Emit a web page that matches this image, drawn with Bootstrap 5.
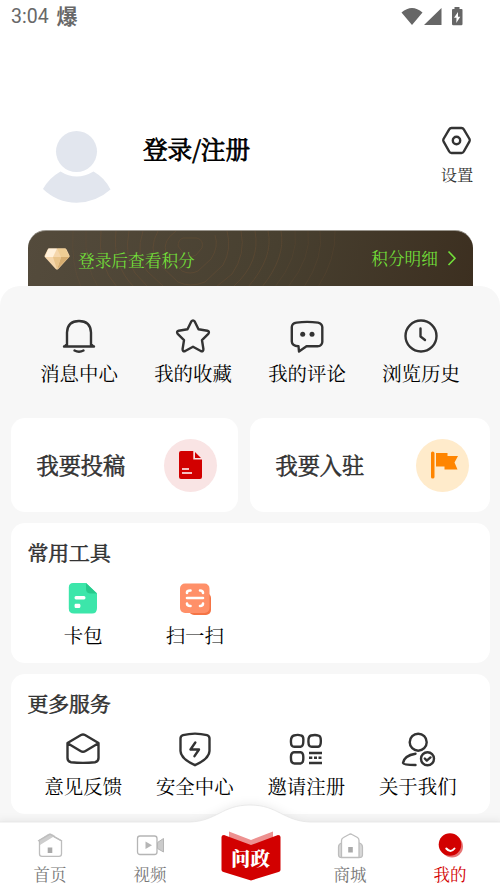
<!DOCTYPE html>
<html lang="zh-CN">
<head>
<meta charset="utf-8">
<meta name="viewport" content="width=device-width, initial-scale=1">
<title>我的</title>
<link rel="stylesheet" href="https://cdn.jsdelivr.net/npm/bootstrap@5.3.0/dist/css/bootstrap.min.css">
<style>
body{font-family:"Noto Serif CJK SC","Noto Serif SC","Source Han Serif SC","Liberation Serif","Noto Sans CJK SC",serif;color:#000;width:500px;height:889px;overflow:hidden;background:#fff}
svg{display:block;flex:none;overflow:visible}
.line{fill:none;stroke:#333;stroke-width:2.4;stroke-linecap:round;stroke-linejoin:round}
.statusbar{height:34px;padding:0 37px 0 11px;font:400 19.5px/34px Roboto,"Noto Sans CJK SC",sans-serif;color:#686868}
.statusbar b{font-size:21px}
.profile{height:196px;padding:91px 26px 0 43px}
.avatar{margin-top:6px}
.login{font-size:24.6px;font-weight:400;-webkit-text-stroke:.8px currentColor;line-height:36px;margin:6px 0 0 32px;color:#000}
.setting{font-size:16.3px;line-height:24px;color:#333;width:34px}
.setting svg{margin-bottom:7px}
.points{height:56px;margin:0 27px 0 28px;border-radius:18px 18px 0 0;background:linear-gradient(105deg,#544b3c,#484030 55%,#3c2f20);color:#72df39;font-size:16.7px;overflow:hidden;position:relative;border-top:1px solid #99958d}
.rings{position:absolute;left:0;top:0}
.panel{height:536px;background:#f7f7f7;border-radius:20px 20px 0 0;padding:0 10px 0 11px}
.quick{height:132px;padding:31px 12px 0 11px}
.item{font-size:19.4px;line-height:28px;flex:1 1 0;white-space:nowrap}
.item svg{margin-bottom:4px}
.tile{background:#fff;border-radius:14px}
.entry{height:94px;font-size:22.2px;-webkit-text-stroke:.6px currentColor;color:#333;padding:0 21px 0 25.5px}
.entry svg{-webkit-text-stroke:0}
.disc{width:53px;height:53px;border-radius:50%}
.pink{background:#f9e4e4}.amber{background:#ffebcb}
.group{height:140px;padding:13px 16.500px 0 16.500px;margin-top:11px}
.group h2{font-size:20.8px;font-weight:400;-webkit-text-stroke:.6px currentColor;line-height:32px;color:#333;margin:0 0 11px}
.group .item svg{margin-bottom:4px}
.tabs{height:67px;position:relative;background:#fff;font-size:16.5px;line-height:24px;color:#777}
.tabs .hump{position:absolute;left:0;top:-20px;filter:drop-shadow(0 -1px 4px rgba(0,0,0,.07))}
.tab{flex:1 1 0;position:relative;padding-top:8px}
.tab svg{margin-bottom:2px}
.current{color:#d20000}
.ask{position:relative;width:60px;height:52px;left:.5px}
.ask span{position:absolute;left:0;right:0;top:14.500px;text-align:center;color:#fff;font-weight:900;font-size:19.5px;line-height:26px}
</style>
<script src="https://cdn.jsdelivr.net/npm/bootstrap@5.3.0/dist/js/bootstrap.bundle.min.js"></script>
</head>
<body>
<header class="statusbar d-flex align-items-center">
  <span>3:04</span><b class="ms-2">爆</b>
  <svg class="ms-auto" width="62" height="20" viewBox="0 0 62 20" fill="#666"><path d="M.5 5.500Q11-3.500 21.500 5.500L11 18zM40.500 1v17H23zM53.500 0h5v2h2q1 0 1 1v14q0 1.200-1.200 1.200h-8.100Q51 18.200 51 17V3q0-1 1-1h1.500z"/><path fill="#fff" d="M57 5l-4 5.800h2.500L55.300 16l4-6.200H57z"/></svg>
</header>

<section class="profile d-flex align-items-start">
  <svg class="avatar" width="68" height="72" viewBox="0 0 68 72" fill="#e2e6ee"><circle cx="33.500" cy="20.500" r="20.500"/><path d="M17.500 40.500Q33.500 50.500 50.500 40.500Q62 47 67.500 58.500Q53 71.500 33.500 71.700Q14 71.500 0 58Q6 47 17.500 40.500z"/></svg>
  <h1 class="login">登录/注册</h1>
  <div class="setting ms-auto d-flex flex-column align-items-center">
    <svg width="30" height="30" viewBox="0 0 30 30"><path class="line" d="M9.500 3H19.500Q21 3 21.800 4.300L27.500 14Q28 15.300 27.500 16.300L21.800 26.500Q21 28 19.500 28H9.500Q8 28 7.200 26.500L1.500 16.300Q1 15.300 1.500 14L7.200 4.300Q8 3 9.500 3z"/><circle class="line" cx="14.500" cy="15.500" r="3.700"/></svg>
    <span>设置</span>
  </div>
</section>

<section class="points d-flex align-items-center px-3">
  <svg class="rings" width="445" height="56" viewBox="28 230 445 56" fill="none" stroke="#8a5b38" stroke-opacity=".24">
    <path d="M183 237h14q7 2 5 10l-6 7q-7 4-12-1l-6-8q0-6 5-8z"/>
    <path d="M176 230q-14 10-10 22l16 18q8 4 16 0l13-12q8-12 4-24"/>
    <path d="M158 230q-10 18 0 32l20 19q12 6 27 0l18-17q9-16 4-34"/>
    <path d="M143 230q-8 24 4 40l17 16M216 286l16-13q14-20 9-43"/>
    <path d="M129 230q-5 26 6 42l13 14M233 286q28-25 22-56M116 230q-4 34 18 56M248 286q26-30 20-56M101 230q-4 34 16 56M262 286q24-30 19-56"/>
    <path stroke-opacity=".14" d="M86 230q-2 34 12 56M275 286q24-30 20-56M73 230q-2 34 8 56M288 286q24-30 20-56M304 286q20-30 16-56M318 286q18-28 17-56"/>
  </svg>
  <svg class="position-relative" width="26" height="22" viewBox="0 0 26 22"><path fill="#f5d6ab" d="M5 .5H21Q22 .5 22.600 1.500L25.500 7.500Q25.800 8.500 25 9.300L14.300 21Q13 22 11.700 21L1 9.300Q.3 8.500.7 7.500L3.600 1.500Q4 .5 5 .5z"/><path fill="#fff0da" d="M4.500.5H13L9 9H.8z"/><path fill="#efcd94" d="M13 .5h8.500L25.500 9H17z"/><path fill="#d6ad70" d="M17 9h8.200L13 21.600z"/><path fill="#e9c48b" d="M9 9h8l-4 12.600z"/></svg>
  <span class="position-relative ms-2 pt-1">登录后查看积分</span>
  <span class="position-relative ms-auto">积分明细</span>
  <svg class="position-relative ms-2" width="11" height="16" viewBox="0 0 11 16" fill="none" stroke="#72df39" stroke-width="1.600"><path d="M2.500 .5 9 7.200 2.500 14"/></svg>
</section>

<main class="panel">
  <nav class="quick d-flex text-center">
    <div class="item d-flex flex-column align-items-center"><svg width="38" height="38" viewBox="0 0 38 38"><path class="line" d="M7 28V15.500Q7.500 4 19 4T31 15.500V28M4 29.500H34M14.500 33.500Q19 36 23.500 33.500M4.500 29.500 7 27M33.500 29.500 31 27"/></svg><span>消息中心</span></div>
    <div class="item d-flex flex-column align-items-center"><svg width="38" height="38" viewBox="0 0 38 38"><path class="line" d="M17.300 4.500Q19 2.200 20.700 4.500L24.500 12.300 33.300 13.700Q36 14.500 34.300 16.800L28 23.200 29.400 32Q29.500 35 26.800 34L19 29.800 11.200 34Q8.500 35 8.600 32L10 23.200 3.700 16.800Q2 14.500 4.700 13.700L13.500 12.300z"/></svg><span>我的收藏</span></div>
    <div class="item d-flex flex-column align-items-center"><svg width="38" height="38" viewBox="0 0 38 38"><path class="line" d="M8.500 5.600Q19 4.200 30 5.600 34 6.500 34.300 10V25Q34 29 29.500 29.300H18.500L11 34.500 10.500 29.300Q4 29 3.800 24.500V10Q4 6.200 8.500 5.600z"/><circle cx="14.700" cy="17.300" r="2.500" fill="#333"/><circle cx="24" cy="17.300" r="2.500" fill="#333"/></svg><span>我的评论</span></div>
    <div class="item d-flex flex-column align-items-center"><svg width="38" height="38" viewBox="0 0 38 38"><circle class="line" cx="19" cy="19" r="15.500"/><path class="line" d="M18.500 11.500V19.500L23 23"/></svg><span>浏览历史</span></div>
  </nav>

  <section class="d-flex" style="gap:12px">
    <div class="tile entry d-flex align-items-center justify-content-between" style="width:227px"><span>我要投稿</span>
      <div class="disc pink d-flex align-items-center justify-content-center"><svg width="23" height="28" viewBox="0 0 23 28"><path fill="#d20000" d="M2 0H14.300V8.600H23V26Q23 28 21 28H2Q0 28 0 26V2Q0 0 2 0zM16 1 22 7H16z"/><path stroke="#fff" stroke-width="1.500" d="M3 18H10M3 22H13"/></svg></div>
    </div>
    <div class="tile entry flex-grow-1 d-flex align-items-center justify-content-between"><span>我要入驻</span>
      <div class="disc amber d-flex align-items-center justify-content-center"><svg width="28" height="28" viewBox="0 0 28 28"><path fill="#ff8500" d="M2 2Q2 .5 3.700.5T5.500 2V26Q5.500 27.500 3.700 27.500T2 26zM7 2H18.500V5H29L25.500 11.500 28.500 18.500H15.500V15.500H7z"/></svg></div>
    </div>
  </section>

  <section class="tile group">
    <h2>常用工具</h2>
    <div class="d-flex text-center">
      <div class="item d-flex flex-column align-items-center"><svg width="38" height="38" viewBox="0 0 38 38"><path fill="#3ce6aa" d="M9 4H22L33 14.500V29Q33 34.500 28 34.500H10Q4.800 34.500 4.800 29.500V8.500Q4.800 4 9 4z"/><path fill="#26ca8c" d="M22 4 33 14.500H26Q22 14 22 10z"/><path fill="#fff" d="M12 17H20Q21.500 17 21.500 18.800T20 20.600H12Q10.500 20.600 10.500 18.800T12 17zM11.500 24.700H15.500Q16.500 25 16.500 26.800T15.500 29H11.500Q10.500 29 10.500 26.800T11.500 24.700z"/></svg><span>卡包</span></div>
      <div class="item d-flex flex-column align-items-center"><svg width="38" height="38" viewBox="0 0 38 38"><rect x="13" y="14" width="22" height="22" rx="5" fill="#f57445"/><rect x="4" y="4.500" width="29.500" height="29.500" rx="5" fill="#ff9069"/><path fill="none" stroke="#fff" stroke-width="2.600" stroke-linecap="round" d="M11 19H27M11 14V13.500Q11 11.500 14.500 11.500M24 11.500Q27 11.500 27 14M11 24.500Q11 27 14.500 27M24 27Q27 27 27 24.500"/></svg><span>扫一扫</span></div>
      <div class="item"></div><div class="item"></div>
    </div>
  </section>

  <section class="tile group">
    <h2>更多服务</h2>
    <div class="d-flex text-center">
      <div class="item d-flex flex-column align-items-center"><svg width="38" height="38" viewBox="0 0 38 38"><path class="line" d="M3.500 13 17 5Q19 4 21 5L34.500 13V28Q34.500 31.500 31 32.200 19 33.500 7 32.200 3.500 31.500 3.500 28zM4 13.500 16.500 21Q19 22.500 21.500 21L34 13.500"/></svg><span>意见反馈</span></div>
      <div class="item d-flex flex-column align-items-center"><svg width="38" height="38" viewBox="0 0 38 38"><path class="line" d="M7 5.200Q19 2 31 5.200 33.500 6 33.500 8.500V21Q33.500 28.500 19 35.200 4.500 28.500 4.500 21V8.500Q4.500 6 7 5.200zM19.300 12.500 14.500 19.500H23L18.500 26.200"/></svg><span>安全中心</span></div>
      <div class="item d-flex flex-column align-items-center"><svg width="38" height="38" viewBox="0 0 38 38"><path class="line" d="M7 5.500Q11 4.300 14 5.500 16.800 6 16.300 10.800 16.500 16.300 13.500 16.800H7.500Q4 17 4 12.500 3.500 6.500 7 5.500zM24 5.500Q28.500 4.600 31.500 5.600 34 6 33.800 11 34 16.300 31 16.800H25Q21.500 17 21.500 12.500 21 6.500 24 5.500zM7 22.200H13.500Q16.500 22.500 16.300 27.500 16.500 33 13.500 33.500H7.500Q4 33.500 4 28.500 3.500 22.500 7 22.200z"/><path class="line" style="stroke-linecap:butt" d="M22 23H35M22 27.800H25.300M27 27.800H30M31.500 27.800H34.500M22 33H35"/></svg><span>邀请注册</span></div>
      <div class="item d-flex flex-column align-items-center"><svg width="38" height="38" viewBox="0 0 38 38"><circle class="line" cx="19.200" cy="12.200" r="8.500"/><path class="line" d="M16.500 23.700Q5 25.500 4 33 4.500 35 16.500 35"/><circle class="line" cx="28.500" cy="28.800" r="6.500"/><path class="line" d="M25.800 28.500 27.800 30.600 31.500 27.400"/></svg><span>关于我们</span></div>
    </div>
  </section>
</main>

<nav class="tabs d-flex text-center">
  <svg class="hump" width="500" height="60" viewBox="0 0 500 60"><path fill="#fff" stroke="#e4e4e4" stroke-width=".8" d="M-2 20H190C217 19 222 3 250 3S283 19 310 20H502V90H-2z"/></svg>
  <div class="tab d-flex flex-column align-items-center"><svg width="30" height="30" viewBox="0 0 30 30"><path fill="#fff" stroke="#bdbdbd" stroke-width="1.300" d="M4.500 10.500 15 4.500 26.500 11V24Q26.500 26.300 24 26.300H7Q4.500 26.300 4.500 24z"/><path fill="#cdcdcd" d="M3 10.500 13 4Q15 3 17 4L20 5.800 5 15V11z"/><path fill="none" stroke="#bdbdbd" stroke-width="1.300" d="M3 11 15 4.200 27 11"/><path fill="#aaa" d="M12.700 17.500h4.600V23h-4.600z"/></svg><span>首页</span></div>
  <div class="tab d-flex flex-column align-items-center"><svg width="30" height="30" viewBox="0 0 30 30"><rect x="2.500" y="6" width="19.500" height="18.500" rx="2.500" fill="#fff" stroke="#b5b5b5" stroke-width="1.300"/><path fill="#cbcbcb" stroke="#b5b5b5" d="M22.500 12.500 28.500 8.500V22L22.500 18.500z"/><path fill="#b5b5b5" d="M10.500 11.500 17 15.200 10.500 19z"/></svg><span>视频</span></div>
  <div class="tab d-flex justify-content-center"><div class="ask"><svg width="60" height="52" viewBox="0 0 60 52"><path fill="#ed9190" d="M8 1.500 30 10 52 1.500V20H8z"/><path fill="#d20000" d="M3 5 30 15 57 5Q59.500 5 59.500 7V40Q59.500 41.500 57.500 42L30 50.500 2.500 42Q.5 41.500.5 40V7Q.5 5 3 5z"/></svg><span>问政</span></div></div>
  <div class="tab d-flex flex-column align-items-center"><svg width="30" height="30" viewBox="0 0 30 30"><path fill="#d8d8d8" stroke="#bdbdbd" stroke-width="1.200" d="M6.500 13Q3.500 14 3.500 17V25Q3.500 27.500 6.500 27.500H24.500Q27.500 27.500 27.500 25V17Q27.500 14 24.500 13z"/><path fill="#fff" stroke="#bdbdbd" stroke-width="1.300" d="M6.500 27.500V10.500Q6.500 8.500 8.500 7.500L14 4.500Q15.500 3.500 17 4.500L22.500 7.500Q24 8.500 24 10.500V27.500z"/><path fill="#aaa" d="M13.200 17h4.600v5.500h-4.600z"/></svg><span>商城</span></div>
  <div class="tab current d-flex flex-column align-items-center"><svg width="30" height="30" viewBox="0 0 30 30"><circle cx="17" cy="16.500" r="11" fill="#e77575"/><circle cx="15" cy="14.500" r="11.300" fill="#d20000"/><path fill="none" stroke="#fff" stroke-width="2" stroke-linecap="round" d="M11.300 18.500Q15.500 23.500 19.500 18.500"/></svg><span>我的</span></div>
</nav>
</body>
</html>
